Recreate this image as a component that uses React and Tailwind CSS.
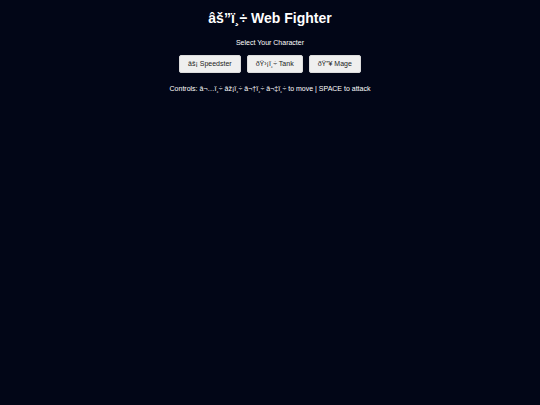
import React, { useState } from "react";

const characters = [
  { id: "speedster", label: "\u00e2\u0161\u00a1 Speedster" },
  { id: "tank", label: "\u00f0\u0178\u203a\u00a1\u00ef\u00b8\u00f7 Tank" },
  { id: "mage", label: "\u00f0\u0178\u201d\u00a5 Mage" },
];

const App = () => {
  const [selected, setSelected] = useState(null);

  return (
    <div className="min-h-screen bg-[#020617] text-white flex flex-col items-center pt-[9px] font-['Liberation_Sans',Arial,sans-serif]">
      <h1 className="text-[14px] font-bold leading-[18px]">
        {"\u00e2\u0161\u201d\u00ef\u00b8\u00f7 Web Fighter"}
      </h1>

      <p className="mt-[11px] text-[7px] leading-[9px]">Select Your Character</p>

      <div className="mt-[8px] flex gap-[6px]">
        {characters.map((c) => (
          <button
            key={c.id}
            onClick={() => setSelected(c.id)}
            className={`h-[18px] px-[8px] text-[7px] text-[#222] bg-[#efefef] border border-[#dcdcdc] rounded-[2px] ${
              selected === c.id ? "bg-[#dcdcdc]" : ""
            }`}
          >
            {c.label}
          </button>
        ))}
      </div>

      <p className="mt-[11px] text-[7px] leading-[9px] text-white">
        {"Controls: \u00e2\u00ac\u2026\u00ef\u00b8\u00f7 \u00e2\u017e\u00a1\u00ef\u00b8\u00f7 \u00e2\u00ac\u2020\u00ef\u00b8\u00f7 \u00e2\u00ac\u2021\u00ef\u00b8\u00f7 to move | SPACE to attack"}
      </p>
    </div>
  );
};

export default App;
